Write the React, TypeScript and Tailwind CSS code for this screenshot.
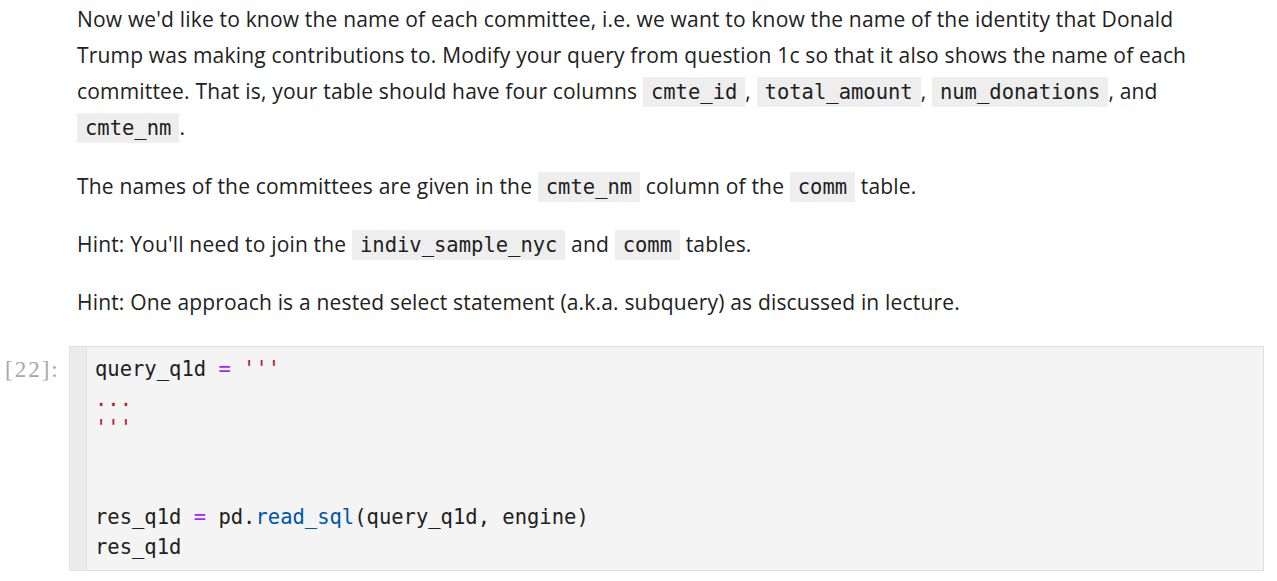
import React from "react";

const C = ({ children }: { children: React.ReactNode }) => (
  <code className="bg-[#eeeeee] px-[8px] py-[3px] text-[20.5px] leading-none tracking-normal text-[#212121] [font-family:'DejaVu_Sans_Mono','Liberation_Mono',monospace]">
    {children}
  </code>
);

export default function App() {
  return (
    <div className="w-[1277px] h-[581px] bg-white overflow-hidden">
      <div className="pl-[77px] pr-[20px] pt-[1px] text-[21px] leading-[36px] tracking-[0.18px] text-[#212121] [font-family:'Open_Sans','Noto_Sans',sans-serif]">
        <p>
          Now we'd like to know the name of each committee, i.e. we want to know the name of the identity that Donald
          <br />
          Trump was making contributions to. Modify your query from question 1c so that it also shows the name of each
          <br />
          committee. That is, your table should have four columns <C>cmte_id</C>, <C>total_amount</C>, <C>num_donations</C>, and
          <br />
          <C>cmte_nm</C>.
        </p>
        <p className="mt-[23px]">
          The names of the committees are given in the <C>cmte_nm</C> column of the <C>comm</C> table.
        </p>
        <p className="mt-[22px]">
          Hint: You'll need to join the <C>indiv_sample_nyc</C> and <C>comm</C> tables.
        </p>
        <p className="mt-[22px]">
          Hint: One approach is a nested select statement (a.k.a. subquery) as discussed in lecture.
        </p>
      </div>
      <div className="flex mt-[26px]">
        <div className="w-[69px] shrink-0 pl-[5px] pt-[9px] text-[23px] leading-[29.6px] tracking-[2px] text-[#a8a8a8] [font-family:'Liberation_Serif',serif]">
          [22]:
        </div>
        <div className="w-[1195px] h-[225px] flex border border-[#e0e0e0] bg-[#f4f4f4]">
          <div className="w-[17px] bg-[#ececec] border-r border-[#e3e3e3]" />
          <pre className="pl-[8px] pt-[8px] text-[20.5px] leading-[29.6px] text-[#212121] [font-family:'DejaVu_Sans_Mono','Liberation_Mono',monospace]">
            <span>query_q1d </span>
            <span className="text-[#aa22ff]">=</span>
            <span className="text-[#ba2121]"> '''</span>
            {"\n"}
            <span className="text-[#ba2121]">...</span>
            {"\n"}
            <span className="text-[#ba2121]">'''</span>
            {"\n\n\n"}
            <span>res_q1d </span>
            <span className="text-[#aa22ff]">=</span>
            <span> pd.</span>
            <span className="text-[#0055aa]">read_sql</span>
            <span>(query_q1d, engine)</span>
            {"\n"}
            <span>res_q1d</span>
          </pre>
        </div>
      </div>
    </div>
  );
}
